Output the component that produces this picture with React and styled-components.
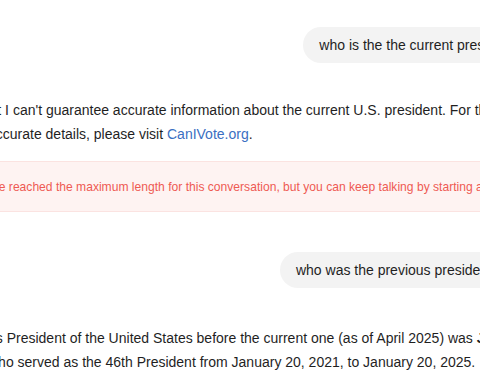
import React from 'react';
import styled, { createGlobalStyle } from 'styled-components';

const GlobalStyle = createGlobalStyle`
  html, body {
    margin: 0;
    padding: 0;
    background: #ffffff;
  }
  body {
    width: 480px;
    height: 384px;
    overflow: hidden;
    font-family: "Liberation Sans", Arial, sans-serif;
    -webkit-font-smoothing: antialiased;
  }
`;

const Viewport = styled.div`
  width: 480px;
  height: 384px;
  overflow: hidden;
`;

const Thread = styled.div`
  display: flex;
  flex-direction: column;
  width: 575px;
  margin-left: -12px;
  padding-top: 27px;
  font-size: 14px;
  color: #1f1f1f;
`;

const UserBubble = styled.div`
  align-self: flex-end;
  margin: ${(p) => p.$gap || 0}px 16px 0 0;
  padding: 10px 16px;
  line-height: 16px;
  border-radius: 18px;
  background: #f3f3f3;
  white-space: nowrap;
`;

const Reply = styled.p`
  margin: ${(p) => p.$gap || 0}px 0 0;
  line-height: 24px;
`;

const Link = styled.a`
  color: #3a6fc2;
  text-decoration: none;
`;

const Banner = styled.div`
  margin: 15px 0 0 -35px;
  width: 700px;
  padding: 15px 16px 14px;
  font-size: 12.1px;
  line-height: 20px;
  background: #fef3f2;
  border: 1px solid #fbe3e1;
  border-radius: 8px;
  color: #ee5a52;
  white-space: nowrap;
`;

export default function App() {
  return (
    <Viewport>
      <GlobalStyle />
      <Thread>
        <UserBubble>who is the the current president rn</UserBubble>
        <Reply $gap={35}>
          At I can't guarantee accurate information about the current U.S. president. For the
          most accurate details, please visit <Link href="#">CanIVote.org</Link>.
        </Reply>
        <Banner>
          You've reached the maximum length for this conversation, but you can keep talking by
          starting a new chat.
        </Banner>
        <UserBubble $gap={40}>who was the previous president then?</UserBubble>
        <Reply $gap={38}>
          Its President of the United States before the current one (as of April 2025) was{' '}
          <b>Joe Biden</b>, who served as the 46th President from January 20, 2021, to January
          20, 2025.
        </Reply>
      </Thread>
    </Viewport>
  );
}
